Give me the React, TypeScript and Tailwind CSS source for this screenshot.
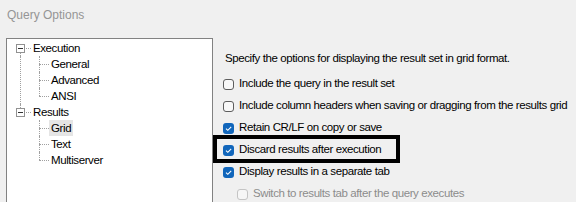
import React from "react";

const dots = "border-dotted border-[#a0a0a0]";

function RootRow({ label, first, hasNext }: { label: string; first?: boolean; hasNext?: boolean }) {
  return (
    <div className="flex h-4">
      <div className="ml-[9px] flex w-[9px] flex-col items-center">
        <div className={`h-[4px] w-0 ${first ? "" : `border-l ${dots}`}`} />
        <div className="flex h-[9px] w-[9px] items-center justify-center border border-[#919191] bg-white">
          <div className="h-px w-[5px] bg-[#333]" />
        </div>
        <div className={`w-0 flex-1 ${hasNext ? `border-l ${dots}` : ""}`} />
      </div>
      <div className={`ml-[1px] w-[5px] self-center border-t ${dots}`} />
      <span className="ml-[2px] leading-4">{label}</span>
    </div>
  );
}

function ChildRow({ label, last, selected }: { label: string; last?: boolean; selected?: boolean }) {
  return (
    <div className="flex h-4">
      <div className="w-[18px]" />
      <div className="flex w-[10px] flex-col">
        <div className={`h-2 border-l ${dots}`} />
        <div className={`h-2 border-t ${dots} ${last ? "" : "border-l"}`} />
      </div>
      <span className={`px-[2px] leading-4 ${selected ? "bg-[#e5e5e5]" : ""}`}>{label}</span>
    </div>
  );
}

function Box({ checked, disabled }: { checked?: boolean; disabled?: boolean }) {
  if (checked) {
    return (
      <div className="flex h-[11px] w-[11px] shrink-0 items-center justify-center rounded-[3px] bg-[#1166bb]">
        <svg width="9" height="9" viewBox="0 0 9 9">
          <polyline points="2,4.6 3.8,6.3 7.2,2.8" fill="none" stroke="white" strokeWidth="1.1" />
        </svg>
      </div>
    );
  }
  return (
    <div
      className={`h-[11px] w-[11px] shrink-0 rounded-[3px] border ${
        disabled ? "border-[#c4c4c4] bg-[#f6f6f6]" : "border-[#5d5d5d] bg-[#f8f8f8]"
      }`}
    />
  );
}

function Option({
  label,
  checked,
  disabled,
  indent,
  marked,
}: {
  label: string;
  checked?: boolean;
  disabled?: boolean;
  indent?: boolean;
  marked?: boolean;
}) {
  return (
    <div className={`relative flex h-[22px] items-center gap-[5px] whitespace-nowrap ${indent ? "pl-[14px]" : ""}`}>
      <Box checked={checked} disabled={disabled} />
      <span className={disabled ? "text-[#8c8c8c]" : ""}>{label}</span>
      {marked && (
        <div className="absolute -left-[10px] top-[-4px] h-[28px] w-[187px] border-4 border-black" />
      )}
    </div>
  );
}

export default function App() {
  return (
    <div className="h-[202px] w-[576px] overflow-hidden bg-[#f0f0f0] font-['Liberation_Sans',Arial,sans-serif] text-[11.5px] tracking-[-0.4px] text-black">
      <div className="h-[38px] pl-[7px] pt-[7px] text-[12px] leading-4 tracking-normal text-[#959595]">
        Query Options
      </div>
      <div className="flex">
        <div className="ml-[6px] h-[170px] w-[207px] shrink-0 border border-b-0 border-[#828282] bg-white pt-[1px]">
          <RootRow label="Execution" first hasNext />
          <div className={`ml-[13px] border-l ${dots}`}>
            <ChildRow label="General" />
            <ChildRow label="Advanced" />
            <ChildRow label="ANSI" last />
          </div>
          <RootRow label="Results" />
          <div className="ml-[13px] border-l border-transparent">
            <ChildRow label="Grid" selected />
            <ChildRow label="Text" />
            <ChildRow label="Multiserver" last />
          </div>
        </div>
        <div className="ml-[10px] min-w-0 flex-1">
          <div className="whitespace-nowrap pl-[2px] pt-[12px] leading-4">
            Specify the options for displaying the result set in grid format.
          </div>
          <div className="mt-[7px] flex flex-col">
            <Option label="Include the query in the result set" />
            <Option label="Include column headers when saving or dragging from the results grid" />
            <Option label="Retain CR/LF on copy or save" checked />
            <Option label="Discard results after execution" checked marked />
            <Option label="Display results in a separate tab" checked />
            <Option label="Switch to results tab after the query executes" disabled indent />
          </div>
        </div>
      </div>
    </div>
  );
}
